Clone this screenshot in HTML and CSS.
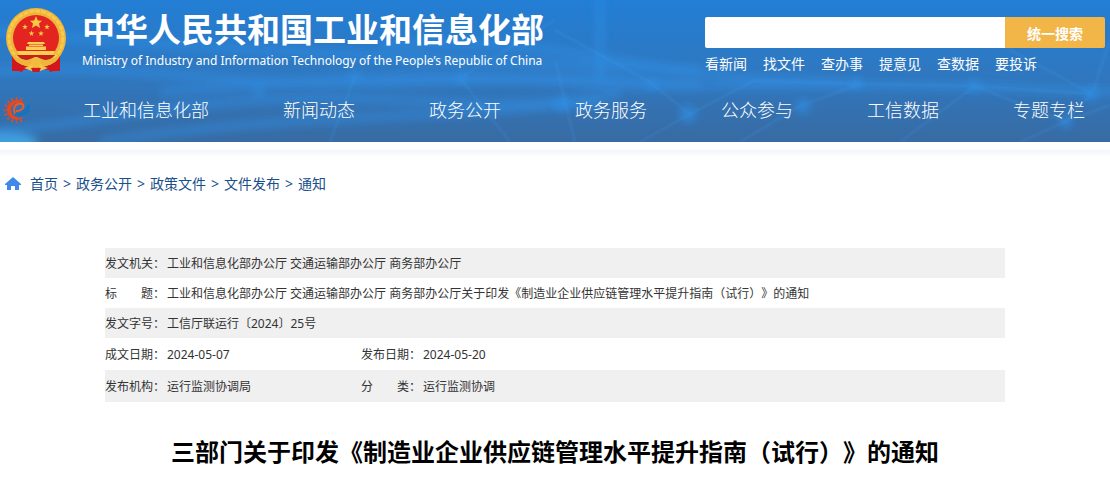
FILE: index.html
```html
<!DOCTYPE html>
<html lang="zh-CN">
<head>
  <meta charset="UTF-8" />
  <meta name="viewport" content="width=device-width, initial-scale=1.0" />
  <title>三部门关于印发《制造业企业供应链管理水平提升指南（试行）》的通知</title>
  <link rel="stylesheet" href="styles.css">
</head>
<body>
  <header class="header">
    <svg class="header-bg" viewBox="0 0 1110 142" preserveAspectRatio="none" aria-hidden="true">
      <defs>
        <filter id="soft" x="-20%" y="-50%" width="140%" height="200%"><feGaussianBlur stdDeviation="4" /></filter>
        <filter id="thin" x="-20%" y="-50%" width="140%" height="200%"><feGaussianBlur stdDeviation="1" /></filter>
      </defs>
      <g filter="url(#soft)" fill="none" stroke="#2f8fe8" stroke-opacity=".55" stroke-width="7">
        <path d="M-10 72 C120 60 220 90 420 82 S620 80 700 84" />
        <path d="M-10 132 C90 124 200 96 330 98 S500 112 620 94" />
        <path d="M100 142 C180 130 260 122 400 116 S520 106 600 104" />
        <path d="M-10 30 C120 44 260 50 420 58 S620 66 700 70" />
        <path d="M160 92 C260 84 420 70 560 82 S760 76 1120 92" />
        <path d="M600 -5 V80" />
        <path d="M380 45 C480 40 540 46 640 64 S800 80 860 84" />
      </g>
      <g filter="url(#thin)" fill="none" stroke="#4aa0ee" stroke-opacity=".22" stroke-width="2">
        <path d="M555 60 L575 142 M555 30 L650 82 L690 114 L640 142" />
        <path d="M690 114 L755 80 L860 84 L975 86 L1092 94" />
        <path d="M860 84 L800 106 L740 142 M975 86 L900 142 M975 86 L1065 122 L1110 105" />
        <path d="M1092 94 L1110 40 M1092 94 L1065 122 L1020 142 M1010 50 L1092 94" />
        <path d="M355 76 L330 142 M460 78 L510 142 M460 78 L555 20" />
      </g>
      <g filter="url(#soft)" fill="#2e90e8" fill-opacity=".7">
        <circle cx="562" cy="104" r="7" />
        <circle cx="652" cy="84" r="5" />
        <circle cx="688" cy="114" r="8" />
        <circle cx="803" cy="106" r="7" />
        <circle cx="857" cy="84" r="5" />
        <circle cx="974" cy="86" r="6" />
        <circle cx="1091" cy="94" r="7" />
        <circle cx="1066" cy="122" r="6" />
        <circle cx="355" cy="76" r="5" />
        <circle cx="461" cy="78" r="5" />
        <circle cx="258" cy="91" r="5" />
        <ellipse cx="6" cy="142" rx="32" ry="10" fill="#45b4fa" />
      </g>
    </svg>

    <div class="top">
      <a class="brand" href="#">
        <svg class="emblem" viewBox="0 0 62 64" aria-hidden="true">
          <path d="M8 46 H54 Q56 56 53 63 L37 61 H25 L9 63 Q6 56 8 46Z" fill="#c9141b" />
          <circle cx="31" cy="30" r="30" fill="#efb53a" />
          <circle cx="31" cy="30" r="27" fill="none" stroke="#f7c94c" stroke-width="3" stroke-dasharray="5 1" />
          <circle cx="31" cy="30" r="23" fill="#e32420" />
          <path d="M31 8 L32.800 12.500 L37 12.800 L34 15.600 L35 20 L31 17.500 L27 20 L28 15.600 L25 12.800 L29.200 12.500Z" fill="#fbc843" />
          <path id="star" d="M20 16 L20.700 18 L22.800 18.100 L21.100 19.400 L21.700 21.500 L20 20.300 L18.300 21.500 L18.900 19.400 L17.200 18.100 L19.300 18Z" fill="#fbc843" />
          <use href="#star" x="22" />
          <use href="#star" x="6.500" y="6.500" />
          <use href="#star" x="16" y="6.500" />
          <path d="M23 34 H39 L40 36 H22Z M24 36.500 H38 V38 H24Z M21 38.500 H41 V42 H21Z" fill="#fbcf55" />
          <path d="M12 43 H50 L48 47 H14Z" fill="#fbd050" />
          <path d="M12 47 H50 Q47 51 42 52 H20 Q15 51 12 47Z" fill="#c7211c" />
          <path d="M5 44 Q12 52 22 52 L31 49 L40 52 Q50 52 57 44 Q52 57 40 58 L31 54 L22 58 Q10 57 5 44Z" fill="#efb53a" />
          <path d="M7 48 Q10 56 20 58 L17 64 Q11 62 7 63Z M55 48 Q52 56 42 58 L45 64 Q51 62 55 63Z" fill="#d3171c" />
          <circle cx="31" cy="54" r="5" fill="#f2bc40" />
          <path d="M19 60 L28 57 L27 63Z M43 60 L34 57 L35 63Z" fill="#f6c64a" />
          <path d="M26 60 H36 L34 64 H28Z" fill="#d3171c" />
        </svg>
        <span class="brand-text">
          <strong class="brand-cn">中华人民共和国工业和信息化部</strong>
          <span class="brand-en" lang="en">Ministry of Industry and Information Technology of the People’s Republic of China</span>
        </span>
      </a>

      <div class="search">
        <form class="search-form">
          <input class="search-input" type="text" aria-label="搜索" />
          <button class="search-btn" type="button">统一搜索</button>
        </form>
        <div class="quick">
          <a href="#">看新闻</a>
          <a href="#">找文件</a>
          <a href="#">查办事</a>
          <a href="#">提意见</a>
          <a href="#">查数据</a>
          <a href="#">要投诉</a>
        </div>
      </div>
    </div>

    <nav class="nav">
      <svg class="nav-logo" viewBox="0 0 28 26" aria-hidden="true">
        <path d="M19 3 A11.500 11.500 0 1 0 21 22" fill="none" stroke="#c4523f" stroke-width="3" stroke-dasharray="2 2.500" />
        <path d="M22 7 A10 10 0 1 0 21 20 C14 22 8 19 8 13 C8 7 15 4 22 7Z" fill="#e8481c" />
        <path d="M12 17 Q9 9 15 7 Q22 6 20 11 Q18 14 13 14" fill="none" stroke="#ef5a25" stroke-width="2" />
        <path d="M27 6 Q29 17 19 19 Q14 20 12 16 Q20 17 24 9Z" fill="#1673bd" />
      </svg>
      <ul class="nav-list">
        <li><a href="#">工业和信息化部</a></li>
        <li><a href="#">新闻动态</a></li>
        <li><a href="#">政务公开</a></li>
        <li><a href="#">政务服务</a></li>
        <li><a href="#">公众参与</a></li>
        <li><a href="#">工信数据</a></li>
        <li><a href="#">专题专栏</a></li>
      </ul>
    </nav>
  </header>

  <div class="crumbs">
    <svg class="home" viewBox="0 0 16 14" aria-hidden="true">
      <path d="M8 0 L16 7 V8 H14 V13 H10 V9 H6 V13 H2 V8 H0 V7Z" fill="#3f8ae8" />
    </svg>
    <a href="#">首页</a><span>&gt;</span>
    <a href="#">政务公开</a><span>&gt;</span>
    <a href="#">政策文件</a><span>&gt;</span>
    <a href="#">文件发布</a><span>&gt;</span>
    <a href="#">通知</a>
  </div>

  <main class="content">
    <table class="info">
      <tr class="odd">
        <th scope="row">发文机关：</th>
        <td colspan="3">工业和信息化部办公厅 交通运输部办公厅 商务部办公厅</td>
      </tr>
      <tr>
        <th scope="row">标　　题：</th>
        <td colspan="3">工业和信息化部办公厅 交通运输部办公厅 商务部办公厅关于印发《制造业企业供应链管理水平提升指南（试行）》的通知</td>
      </tr>
      <tr class="odd">
        <th scope="row">发文字号：</th>
        <td colspan="3">工信厅联运行〔2024〕25号</td>
      </tr>
      <tr class="tall">
        <th scope="row">成文日期：</th>
        <td class="first">2024-05-07</td>
        <th scope="row">发布日期：</th>
        <td>2024-05-20</td>
      </tr>
      <tr class="odd tall">
        <th scope="row">发布机构：</th>
        <td class="first">运行监测协调局</td>
        <th scope="row">分　　类：</th>
        <td>运行监测协调</td>
      </tr>
    </table>

    <h1 class="title">三部门关于印发《制造业企业供应链管理水平提升指南（试行）》的通知</h1>
  </main>
</body>
</html>
```

FILE: styles.css
```css
* {
  box-sizing: border-box;
}

body {
  margin: 0;
  background: #fff;
  color: #333;
  font-family: "Noto Sans", "Noto Sans CJK SC", sans-serif;
  font-size: 14px;
  text-spacing-trim: space-all;
}

a {
  color: inherit;
  text-decoration: none;
}

/* header */
.header {
  position: relative;
  background: linear-gradient(#227ed4, #2f78c1 50%, #386ba3);
  color: #fff;
  overflow: hidden;
}

.header-bg {
  position: absolute;
  inset: 0;
  width: 100%;
  height: 100%;
}

.top {
  position: relative;
  display: flex;
  justify-content: space-between;
  padding: 8px 5px 0;
}

.brand {
  display: flex;
  gap: 15px;
}

.emblem {
  width: 62px;
  height: 64px;
}

.brand-text {
  display: flex;
  flex-direction: column;
  white-space: nowrap;
}

.brand-cn {
  font-size: 33px;
  line-height: 44px;
}

.brand-en {
  font-size: 12px;
  line-height: 18px;
}

.search {
  width: 400px;
  padding-top: 9px;
}

.search-form {
  display: flex;
  height: 31px;
}

.search-input {
  flex: 1;
  min-width: 0;
  padding: 0 10px;
  border: 0;
  border-radius: 2px 0 0 2px;
  background: #fff;
  font-size: 14px;
}

.search-btn {
  width: 100px;
  padding: 0;
  border: 0;
  border-radius: 0 2px 2px 0;
  background: #f1b548;
  color: #fff;
  font-family: inherit;
  font-size: 14px;
  font-weight: bold;
  cursor: pointer;
}

.quick {
  display: flex;
  gap: 16px;
  padding-top: 6px;
  line-height: 20px;
}

.nav {
  position: relative;
  display: flex;
  align-items: center;
  margin-top: 18px;
  padding: 0 25px 14px 3px;
}

.nav-logo {
  width: 28px;
  height: 26px;
}

.nav-list {
  display: flex;
  flex: 1;
  justify-content: space-between;
  margin: 0 0 0 52px;
  padding: 0;
  list-style: none;
  font-size: 18px;
  font-weight: 300;
  line-height: 36px;
}

/* breadcrumb */
.crumbs {
  display: flex;
  align-items: center;
  margin-top: 8px;
  padding: 24px 5px 0;
  background: linear-gradient(#f2f5fa, #fff 8px);
  color: #1a4f8b;
  line-height: 20px;
}

.home {
  width: 16px;
  height: 14px;
  margin-right: 9px;
}

.crumbs span {
  width: 18px;
  text-align: center;
}

/* document */
.content {
  max-width: 900px;
  margin: 54px auto 0;
}

.info {
  width: 100%;
  border-collapse: collapse;
  font-size: 12px;
}

.info tr {
  height: 30px;
}

.info .tall {
  height: 32px;
}

.info .odd {
  background: #f0f0f0;
}

.info th,
.info td {
  padding: 0;
  font-weight: normal;
  text-align: left;
}

.info th {
  width: 62px;
  white-space: nowrap;
}

.info .first {
  width: 194px;
}

.title {
  margin: 32px 0 0;
  color: #000;
  font-size: 24px;
  line-height: 36px;
  text-align: center;
}
```
